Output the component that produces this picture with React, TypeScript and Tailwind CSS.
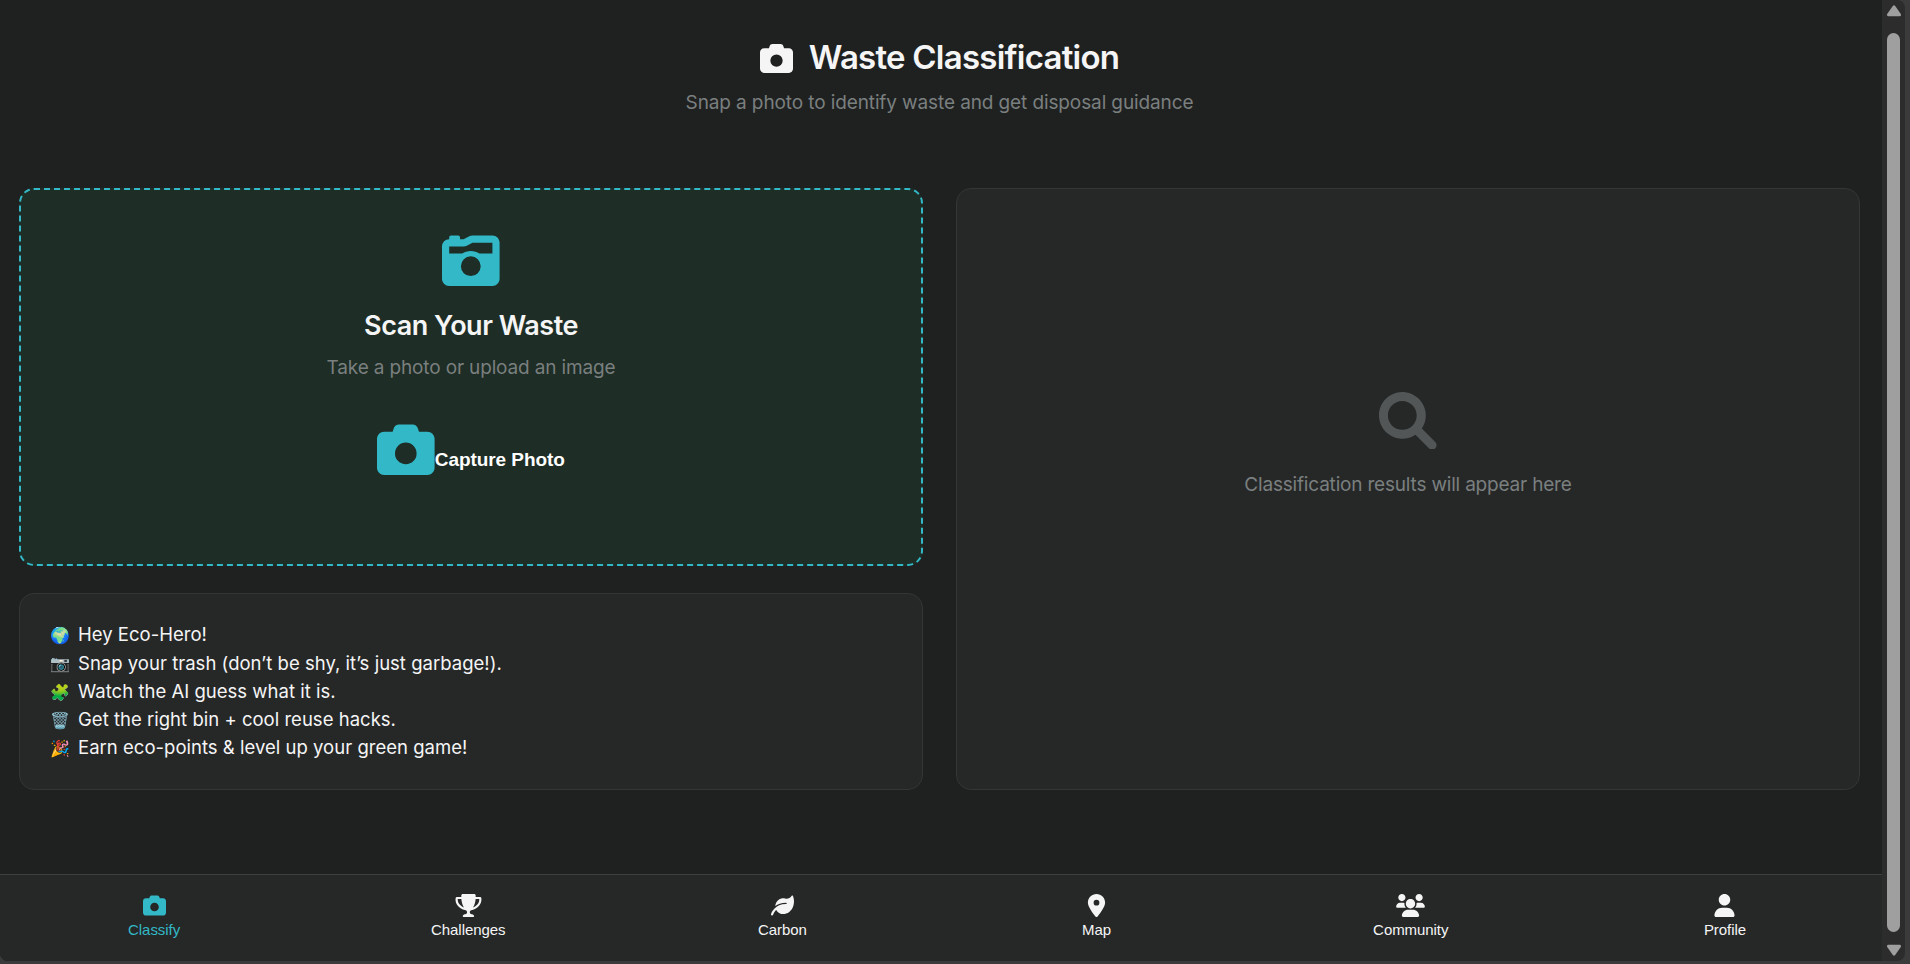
import { FaCamera, FaCameraRetro, FaLocationDot } from "react-icons/fa6";

type IconProps = { className?: string };

const FaTrophy = ({ className }: IconProps) => (
  <svg viewBox="0 0 576 512" fill="currentColor" className={className}>
    <path d="M572.1 82.38C569.5 71.59 559.8 64 548.7 64h-100.8c.2422-12.45 .1078-23.7-.1559-33.02C447.3 13.63 433.2 0 415.8 0H160.2C142.8 0 128.7 13.63 128.2 30.98C127.1 40.3 127.8 51.55 128.1 64H27.26C16.16 64 6.537 71.59 3.912 82.38C3.1 85.78-15.71 167.2 37.07 245.9c37.44 55.82 100.6 95.03 187.5 117.4c18.7 4.805 31.41 22.06 31.41 41.37C256 428.5 236.5 448 212.6 448H208c-26.51 0-47.99 21.49-47.99 48c0 8.836 7.163 16 15.1 16h223.1c8.836 0 15.1-7.164 15.1-16c0-26.51-21.48-48-47.99-48h-4.644c-23.86 0-43.36-19.5-43.36-43.35c0-19.31 12.71-36.57 31.41-41.37c86.96-22.34 150.1-61.55 187.5-117.4C591.7 167.2 572.9 85.78 572.1 82.38zM77.41 219.8C49.47 178.6 47.01 135.7 48.38 112h80.39c5.359 59.62 20.35 131.1 57.67 189.1C137.4 281.6 100.9 254.4 77.41 219.8zM498.6 219.8c-23.44 34.6-59.94 61.75-109 81.22C426.9 243.1 441.9 171.6 447.2 112h80.39C528.1 135.7 526.5 178.7 498.6 219.8z" />
  </svg>
);

const FaLeaf = ({ className }: IconProps) => (
  <svg viewBox="0 0 512 512" fill="currentColor" className={className}>
    <path d="M512 165.4c0 127.9-70.05 235.3-175.3 270.1c-20.04 7.938-41.83 12.46-64.69 12.46c-64.9 0-125.2-36.51-155.7-94.47c-54.13 49.93-68.71 107-68.96 108.1C44.72 472.6 34.87 480 24.02 480c-1.844 0-3.727-.2187-5.602-.6562c-12.89-3.098-20.84-16.08-17.75-28.96c9.598-39.5 90.47-226.4 335.3-226.4C344.8 224 352 216.8 352 208S344.8 192 336 192C228.6 192 151 226.6 96.29 267.6c.1934-10.82 1.242-21.84 3.535-33.05c13.47-65.81 66.04-119 131.4-134.2c28.33-6.562 55.68-6.013 80.93-.0054c56 13.32 118.2-7.412 149.3-61.24c5.664-9.828 20.02-9.516 24.66 .8282C502.7 76.76 512 121.9 512 165.4z" />
  </svg>
);

const FaUsers = ({ className }: IconProps) => (
  <svg viewBox="0 0 640 512" fill="currentColor" className={className}>
    <path d="M319.9 320c57.41 0 103.1-46.56 103.1-104c0-57.44-46.54-104-103.1-104c-57.41 0-103.1 46.56-103.1 104C215.9 273.4 262.5 320 319.9 320zM369.9 352H270.1C191.6 352 128 411.7 128 485.3C128 500.1 140.7 512 156.4 512h327.2C499.3 512 512 500.1 512 485.3C512 411.7 448.4 352 369.9 352zM512 160c44.18 0 80-35.82 80-80S556.2 0 512 0c-44.18 0-80 35.82-80 80S467.8 160 512 160zM183.9 216c0-5.449 .9824-10.63 1.609-15.91C174.6 194.1 162.6 192 149.9 192H88.08C39.44 192 0 233.8 0 285.3C0 295.6 7.887 304 17.62 304h199.5C196.7 280.2 183.9 249.7 183.9 216zM128 160c44.18 0 80-35.82 80-80S172.2 0 128 0C83.82 0 48 35.82 48 80S83.82 160 128 160zM551.9 192h-61.84c-12.8 0-24.88 3.037-35.86 8.24C454.8 205.5 455.8 210.6 455.8 216c0 33.71-12.78 64.21-33.16 88h199.7C632.1 304 640 295.6 640 285.3C640 233.8 600.6 192 551.9 192z" />
  </svg>
);

const FaUser = ({ className }: IconProps) => (
  <svg viewBox="0 0 448 512" fill="currentColor" className={className}>
    <path d="M224 256c70.7 0 128-57.31 128-128s-57.3-128-128-128C153.3 0 96 57.31 96 128S153.3 256 224 256zM274.7 304H173.3C77.61 304 0 381.6 0 477.3c0 19.14 15.52 34.67 34.66 34.67h378.7C432.5 512 448 496.5 448 477.3C448 381.6 370.4 304 274.7 304z" />
  </svg>
);

const SearchIcon = ({ className }: IconProps) => (
  <svg viewBox="0 0 512 512" fill="currentColor" className={className}>
    <path d="M500.3 443.7l-119.7-119.7c27.22-40.41 40.65-90.9 33.46-144.7c-12.23-91.55-87.28-166-178.9-177.6c-136.2-17.24-250.7 97.28-233.4 233.4c11.6 91.64 86.07 166.7 177.6 178.9c53.81 7.191 104.3-6.235 144.7-33.46l119.7 119.7c15.62 15.62 40.95 15.62 56.57 0C515.9 484.7 515.9 459.3 500.3 443.7zM79.1 208c0-70.58 57.42-128 128-128s128 57.42 128 128c0 70.58-57.42 128-128 128S79.1 278.6 79.1 208z" />
  </svg>
);

const tips = [
  ["🌍", "Hey Eco-Hero!"],
  ["📷", "Snap your trash (don’t be shy, it’s just garbage!)."],
  ["🧩", "Watch the AI guess what it is."],
  ["🗑️", "Get the right bin + cool reuse hacks."],
  ["🎉", "Earn eco-points & level up your green game!"],
];

const tabs = [
  { label: "Classify", Icon: FaCamera, active: true },
  { label: "Challenges", Icon: FaTrophy },
  { label: "Carbon", Icon: FaLeaf },
  { label: "Map", Icon: FaLocationDot },
  { label: "Community", Icon: FaUsers },
  { label: "Profile", Icon: FaUser },
];

export default function App() {
  return (
    <div className="flex h-[964px] w-[1910px] overflow-hidden bg-[#3b3b3b] pb-[3px] pr-[5px] font-['Inter','Liberation_Sans',sans-serif] text-[#f5f5f5]">
      <div className="flex w-[1882px] flex-col overflow-hidden rounded-bl-lg bg-[#1f2121]">
        <header className="flex h-[188px] flex-col items-center pt-[36px] pr-[3px]">
          <h1 className="flex h-[44px] items-center gap-[16px] text-[33px] font-semibold tracking-[-0.76px] whitespace-nowrap">
            <FaCamera className="size-[33px]" />
            Waste Classification
          </h1>
          <p className="mt-[8px] text-[19px] leading-[29px] tracking-[-0.11px] text-[#7a7f7f] whitespace-nowrap">Snap a photo to identify waste and get disposal guidance</p>
        </header>
        <main className="flex h-[602px] shrink-0 gap-[33px] pl-[19px]">
          <div className="flex w-[904px] flex-col gap-[27px]">
            <section className="flex h-[378px] flex-col items-center rounded-[15px] border-2 border-dashed border-[#32b8c6] bg-[#1e2d25]">
              <FaCameraRetro className="mt-[41.5px] size-[57.6px] text-[#32b8c6]" />
              <h2 className="mt-[20.9px] text-[27px] leading-[32px] font-semibold tracking-[-0.48px] whitespace-nowrap">Scan Your Waste</h2>
              <p className="mt-[11px] text-[19px] leading-[29px] tracking-[-0.15px] text-[#7a7f7f] whitespace-nowrap">Take a photo or upload an image</p>
              <button className="mt-[39px] flex h-[58px] items-center font-['Liberation_Sans',sans-serif] text-[19px] font-bold tracking-[-0.08px] text-white">
                <FaCamera className="size-[57.6px] text-[#32b8c6]" />
                <span className="mt-[21px]">Capture Photo</span>
              </button>
            </section>
            <section className="flex h-[197px] flex-col rounded-[15px] border border-[#343636] bg-[#262828] pt-[27px] pl-[30px]">
              {tips.map(([icon, text]) => (
                <div key={text} className="flex h-[28.3px] items-center text-[18.5px] tracking-[0.02px] whitespace-nowrap">
                  <span className="w-[28px] text-[16px]">{icon}</span>
                  <span>{text}</span>
                </div>
              ))}
            </section>
          </div>
          <section className="flex w-[904px] flex-col items-center rounded-[15px] border border-[#343636] bg-[#262828] pt-[202.8px]">
            <SearchIcon className="size-[57.6px] text-[#525656]" />
            <p className="mt-[21px] text-[19px] leading-[29px] tracking-[-0.19px] text-[#7a7f7f] whitespace-nowrap">Classification results will appear here</p>
          </section>
        </main>
        <nav className="mt-auto -ml-[3px] flex h-[87px] w-[1885px] border-t border-[#3d3f3f] bg-[#262828] font-['Liberation_Sans',sans-serif]">
          {tabs.map(({ label, Icon, active }) => (
            <div key={label} className={active ? "flex flex-1 flex-col items-center pt-[19px] text-[#32b8c6]" : "flex flex-1 flex-col items-center pt-[19px]"}>
              <Icon className="h-[23px] w-[29px]" />
              <span className="mt-[3px] text-[15px] leading-[19px] tracking-[-0.06px]">{label}</span>
            </div>
          ))}
        </nav>
      </div>
      <div className="flex w-[23px] flex-col items-center rounded-r-lg bg-[#2c2c2c] pt-[5px] pb-[5px]">
        <svg viewBox="0 0 16 12" className="h-[12px] w-[16px] fill-[#9f9f9f]"><path d="M6.8 1Q8 -0.6 9.2 1L14.8 9Q15.6 11.3 13.5 11.3H2.5Q0.4 11.3 1.2 9Z" /></svg>
        <div className="mt-[16px] h-[899px] w-[13px] rounded-full bg-[#9f9f9f]" />
        <svg viewBox="0 0 16 12" className="mt-auto h-[12px] w-[16px] rotate-180 fill-[#9f9f9f]"><path d="M6.8 1Q8 -0.6 9.2 1L14.8 9Q15.6 11.3 13.5 11.3H2.5Q0.4 11.3 1.2 9Z" /></svg>
      </div>
    </div>
  );
}
